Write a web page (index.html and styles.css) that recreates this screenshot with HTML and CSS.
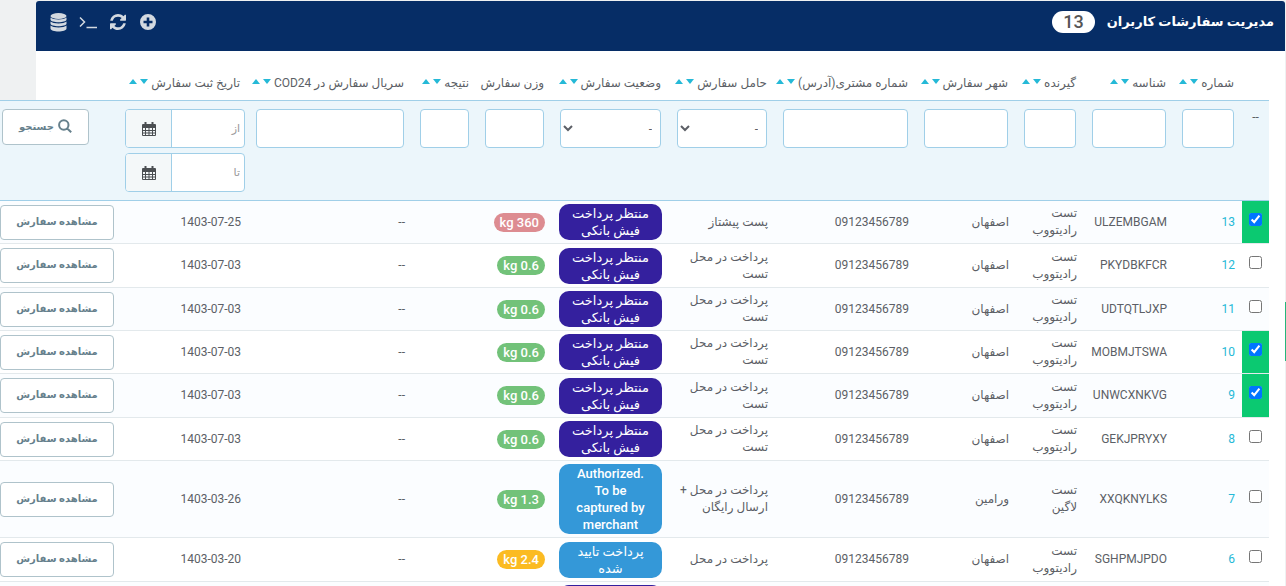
FILE: index.html
```html
<!DOCTYPE html>
<html lang="fa" dir="rtl">
<head>
<meta charset="utf-8">
<title>مدیریت سفارشات کاربران</title>
<link rel="stylesheet" href="styles.css">
</head>
<body>
<main class="panel">
  <header class="panel-head">
    <h1 class="title">مدیریت سفارشات کاربران</h1>
    <span class="count">13</span>
    <nav class="tools">
      <button class="tool" aria-label="افزودن"><svg width="16" height="16" viewBox="0 0 16 16"><path fill="currentColor" fill-rule="evenodd" d="M8 0a8 8 0 1 1 0 16A8 8 0 0 1 8 0zM6.700 3.500v3.200H3.500v2.600h3.200v3.200h2.600V9.300h3.200V6.700H9.300V3.500z"/></svg></button>
      <button class="tool" aria-label="بازخوانی"><svg width="16" height="16" viewBox="0 0 1536 1536"><path fill="currentColor" d="M1511 928q0 5-1 7-64 268-268 434.500T764 1536q-146 0-282.500-55T238 1324l-129 129q-19 19-45 19t-45-19-19-45V960q0-26 19-45t45-19h448q26 0 45 19t19 45-19 45l-137 137q71 66 161 102t187 36q134 0 250-65t186-179q11-17 53-117 8-23 30-23h192q13 0 22.500 9.500t9.500 22.500zM1536 128v448q0 26-19 45t-45 19h-448q-26 0-45-19t-19-45 19-45l138-138Q969 256 768 256q-134 0-250 65T332 500q-11 17-53 117-8 23-30 23H50q-13 0-22.500-9.500T18 608v-7q65-268 270-434.500T768 0q146 0 284 55.500T1297 212l130-129q19-19 45-19t45 19 19 45z"/></svg></button>
      <button class="tool" aria-label="ترمینال"><svg width="18" height="14" viewBox="0 0 18 14"><path fill="none" stroke="currentColor" stroke-width="1.500" d="M1 2.500l4.500 4.500L1 11.500M7.500 12.500H18"/></svg></button>
      <button class="tool" aria-label="پایگاه داده"><svg width="17" height="19" viewBox="0 0 17 19"><g fill="currentColor"><ellipse cx="8.500" cy="3" rx="8" ry="3"/><path d="M.5 4.500c2.500 2.600 13.500 2.600 16 0v2c0 3.600-16 3.600-16 0zM.5 8.500c2.500 2.600 13.500 2.600 16 0v2c0 3.600-16 3.600-16 0zM.5 12.500c2.500 2.600 13.500 2.600 16 0v3c0 4-16 4-16 0z"/></g></svg></button>
    </nav>
  </header>

  <div class="table-wrap">
  <table class="orders">
    <colgroup>
      <col class="c-check"><col class="c-id"><col class="c-ref"><col class="c-name"><col class="c-city"><col class="c-phone"><col class="c-carrier"><col class="c-status"><col class="c-weight"><col class="c-result"><col class="c-serial"><col class="c-date"><col class="c-action">
    </colgroup>
    <thead>
      <tr class="labels">
        <th></th>
        <th>شماره <span class="sort"><i class="down"></i><i class="up"></i></span></th>
        <th>شناسه <span class="sort"><i class="down"></i><i class="up"></i></span></th>
        <th>گیرنده <span class="sort"><i class="down"></i><i class="up"></i></span></th>
        <th>شهر سفارش <span class="sort"><i class="down"></i><i class="up"></i></span></th>
        <th>شماره مشتری(آدرس) <span class="sort"><i class="down"></i><i class="up"></i></span></th>
        <th>حامل سفارش <span class="sort"><i class="down"></i><i class="up"></i></span></th>
        <th>وضعیت سفارش <span class="sort"><i class="down"></i><i class="up"></i></span></th>
        <th>وزن سفارش</th>
        <th>نتیجه <span class="sort"><i class="down"></i><i class="up"></i></span></th>
        <th>سریال سفارش در COD24 <span class="sort"><i class="down"></i><i class="up"></i></span></th>
        <th>تاریخ ثبت سفارش <span class="sort"><i class="down"></i><i class="up"></i></span></th>
        <th></th>
      </tr>
      <tr class="filters">
        <td class="dash">--</td>
        <td><input class="field" type="text" aria-label="شماره"></td>
        <td><input class="field" type="text" aria-label="شناسه"></td>
        <td><input class="field" type="text" aria-label="گیرنده"></td>
        <td><input class="field" type="text" aria-label="شهر سفارش"></td>
        <td><input class="field" type="text" aria-label="شماره مشتری"></td>
        <td><select class="field" aria-label="حامل سفارش"><option>-</option></select></td>
        <td><select class="field" aria-label="وضعیت سفارش"><option>-</option></select></td>
        <td><input class="field" type="text" aria-label="وزن سفارش"></td>
        <td><input class="field" type="text" aria-label="نتیجه"></td>
        <td><input class="field" type="text" aria-label="سریال سفارش"></td>
        <td class="dates">
          <div class="date-group"><input type="text" placeholder="از" aria-label="از تاریخ"><span class="addon"><svg width="14" height="14" viewBox="0 0 14 14"><path fill="none" stroke="currentColor" d="M.5 2.500h13v11H.5zM.5 5.500h13M.5 8.500h13M.5 11h13M3.500 5v8.500M7 5v8.500M10.500 5v8.500"/><path fill="currentColor" d="M1 2h12v3H1zM2.500 0h2v4h-2zM9.500 0h2v4h-2z"/></svg></span></div>
          <div class="date-group"><input type="text" placeholder="تا" aria-label="تا تاریخ"><span class="addon"><svg width="14" height="14" viewBox="0 0 14 14"><path fill="none" stroke="currentColor" d="M.5 2.500h13v11H.5zM.5 5.500h13M.5 8.500h13M.5 11h13M3.500 5v8.500M7 5v8.500M10.500 5v8.500"/><path fill="currentColor" d="M1 2h12v3H1zM2.500 0h2v4h-2zM9.500 0h2v4h-2z"/></svg></span></div>
        </td>
        <td class="search-cell"><button class="btn search"><svg width="14" height="14" viewBox="0 0 14 14"><path fill="none" stroke="currentColor" stroke-width="2" d="M10.500 6A4.700 4.700 0 1 1 1.100 6a4.700 4.700 0 0 1 9.400 0zM9 9.300l4.200 4"/></svg>جستجو</button></td>
      </tr>
    </thead>
    <tbody>
      <tr><td class="check on"><input type="checkbox" checked aria-label="سفارش 13"></td><td class="num">13</td><td>ULZEMBGAM</td><td>تست رادیتووب</td><td>اصفهان</td><td>09123456789</td><td>پست پیشتاز</td><td><span class="status wait">منتظر پرداخت فیش بانکی</span></td><td><span class="weight red">360 kg</span></td><td></td><td>--</td><td>1403-07-25</td><td class="action"><button class="btn view">مشاهده سفارش</button></td></tr>
      <tr><td class="check"><input type="checkbox" aria-label="سفارش 12"></td><td class="num">12</td><td>PKYDBKFCR</td><td>تست رادیتووب</td><td>اصفهان</td><td>09123456789</td><td>پرداخت در محل تست</td><td><span class="status wait">منتظر پرداخت فیش بانکی</span></td><td><span class="weight">0.6 kg</span></td><td></td><td>--</td><td>1403-07-03</td><td class="action"><button class="btn view">مشاهده سفارش</button></td></tr>
      <tr><td class="check"><input type="checkbox" aria-label="سفارش 11"></td><td class="num">11</td><td>UDTQTLJXP</td><td>تست رادیتووب</td><td>اصفهان</td><td>09123456789</td><td>پرداخت در محل تست</td><td><span class="status wait">منتظر پرداخت فیش بانکی</span></td><td><span class="weight">0.6 kg</span></td><td></td><td>--</td><td>1403-07-03</td><td class="action"><button class="btn view">مشاهده سفارش</button></td></tr>
      <tr><td class="check on"><input type="checkbox" checked aria-label="سفارش 10"></td><td class="num">10</td><td>MOBMJTSWA</td><td>تست رادیتووب</td><td>اصفهان</td><td>09123456789</td><td>پرداخت در محل تست</td><td><span class="status wait">منتظر پرداخت فیش بانکی</span></td><td><span class="weight">0.6 kg</span></td><td></td><td>--</td><td>1403-07-03</td><td class="action"><button class="btn view">مشاهده سفارش</button></td></tr>
      <tr><td class="check on"><input type="checkbox" checked aria-label="سفارش 9"></td><td class="num">9</td><td>UNWCXNKVG</td><td>تست رادیتووب</td><td>اصفهان</td><td>09123456789</td><td>پرداخت در محل تست</td><td><span class="status wait">منتظر پرداخت فیش بانکی</span></td><td><span class="weight">0.6 kg</span></td><td></td><td>--</td><td>1403-07-03</td><td class="action"><button class="btn view">مشاهده سفارش</button></td></tr>
      <tr><td class="check"><input type="checkbox" aria-label="سفارش 8"></td><td class="num">8</td><td>GEKJPRYXY</td><td>تست رادیتووب</td><td>اصفهان</td><td>09123456789</td><td>پرداخت در محل تست</td><td><span class="status wait">منتظر پرداخت فیش بانکی</span></td><td><span class="weight">0.6 kg</span></td><td></td><td>--</td><td>1403-07-03</td><td class="action"><button class="btn view">مشاهده سفارش</button></td></tr>
      <tr><td class="check"><input type="checkbox" aria-label="سفارش 7"></td><td class="num">7</td><td>XXQKNYLKS</td><td>تست لاگین</td><td>ورامین</td><td>09123456789</td><td>پرداخت در محل + ارسال رایگان</td><td><span class="status paid">Authorized. To be captured by merchant</span></td><td><span class="weight">1.3 kg</span></td><td></td><td>--</td><td>1403-03-26</td><td class="action"><button class="btn view">مشاهده سفارش</button></td></tr>
      <tr><td class="check"><input type="checkbox" aria-label="سفارش 6"></td><td class="num">6</td><td>SGHPMJPDO</td><td>تست رادیتووب</td><td>اصفهان</td><td>09123456789</td><td>پرداخت در محل</td><td><span class="status paid">پرداخت تایید شده</span></td><td><span class="weight amber">2.4 kg</span></td><td></td><td>--</td><td>1403-03-20</td><td class="action"><button class="btn view">مشاهده سفارش</button></td></tr>
      <tr><td class="check"></td><td></td><td></td><td></td><td></td><td></td><td></td><td><span class="status wait"></span></td><td></td><td></td><td></td><td></td><td class="action"><button class="btn view" aria-label="مشاهده سفارش"></button></td></tr>
    </tbody>
  </table>
  </div>
</main>
<div class="edge"></div>
</body>
</html>
```

FILE: styles.css
```css
* { box-sizing: border-box; }
html { height: 100%; overflow: hidden; background: #eff1f2; }
body {
  margin: 0;
  height: 100%;
  overflow: hidden;
  padding: 1px 1px 0 0;
  font: 12px/17px Roboto, "DejaVu Sans", sans-serif;
  color: #5c5f66;
}
button, input, select { font: inherit; color: inherit; }
.panel { margin-left: 36px; height: 100%; background: #fff; border-radius: 3px 3px 0 0; }
.panel-head {
  display: flex;
  align-items: center;
  height: 50px;
  padding: 0 11px 8px 13px;
  background: #062d66;
  border-radius: 3px 3px 0 0;
}
.title { margin: 0; font-size: 13px; line-height: 24px; font-weight: 700; color: #fff; }
.count {
  margin-right: 12px;
  padding: 0 11px;
  font-size: 18px;
  line-height: 22px;
  font-weight: 500;
  color: #555;
  background: #fff;
  border-radius: 11px;
}
.tools { display: flex; align-items: center; gap: 12px; margin-right: auto; }
.tool { display: flex; justify-content: center; width: 18px; padding: 0; border: 0; background: none; color: #d3d9e0; }
.tool svg { flex: none; }

.table-wrap { margin: 0 16px 0 -36px; }
.orders { width: 100%; table-layout: fixed; border-collapse: separate; border-spacing: 0; }
.c-check { width: 27px; }
.c-id { width: 68px; }
.c-ref { width: 90px; }
.c-name { width: 68px; }
.c-city { width: 100px; }
.c-phone { width: 141px; }
.c-carrier { width: 106px; }
.c-status { width: 117px; }
.c-weight { width: 75px; }
.c-result { width: 65px; }
.c-date { width: 131px; }
.c-action { width: 117px; }

.labels th {
  height: 50px;
  padding: 0 8px 8px 0;
  vertical-align: bottom;
  text-align: right;
  font-weight: 400;
  white-space: nowrap;
  border-bottom: 1px solid #a0cfe8;
}
.sort { display: inline-flex; gap: 3px; vertical-align: 3px; }
.up, .down { border: 4px solid transparent; border-top: 0; border-bottom: 5px solid #25b9d7; }
.down { border-bottom: 0; border-top: 5px solid #25b9d7; }

.filters td { height: 100px; padding: 8px; vertical-align: top; background: #ecf6fb; border-bottom: 1px solid #a0cfe8; }
.filters .dash { padding: 8px 0; text-align: center; }
.field { display: block; width: 100%; height: 39px; padding: 0 8px; background: #fff; border: 1px solid #a0cfe8; border-radius: 4px; }
select.field { padding: 0 4px; }
.filters .dates { padding: 8px 3px 0 8px; }
.date-group { display: flex; height: 39px; margin-bottom: 5px; border: 1px solid #a0cfe8; border-radius: 4px; background: #fff; overflow: hidden; }
.date-group input { flex: 1; min-width: 0; padding: 0 4px; border: 0; background: none; font-size: 11px; }
.date-group input::placeholder { color: #999; }
.addon { display: flex; align-items: center; justify-content: center; width: 46px; border-right: 1px solid #a0cfe8; background: #f4f8f9; color: #4b4f52; }
.btn { background: #fff; border: 1px solid #afc3cb; border-radius: 4px; color: #66808c; font-size: 10px; font-weight: 700; white-space: nowrap; }
.filters .search-cell { padding: 8px 28px 0 0; }
.search { display: flex; align-items: center; justify-content: center; gap: 4px; width: 87px; height: 36px; padding: 0 0 2px; }

tbody td { padding: 3px 7px; height: 43px; vertical-align: middle; text-align: right; background: #fff; border-bottom: 1px solid #e3e9ec; }
tbody tr:nth-child(odd) td { background: #fbfdff; }
tbody tr:nth-child(3n+2) td { height: 44px; }
tbody .num { color: #25b9d7; }
tbody .check { padding: 0 0 6px; text-align: center; }
.check input { display: block; width: 13px; height: 13px; margin: 0 auto; }
tbody tr:nth-child(n) .on { background: #0bc971; }
.status { display: block; min-height: 36px; padding: 1px 10px; text-align: center; font-size: 13px; font-weight: 500; color: #fff; border-radius: 10px; }
.wait { background: #34209e; }
.paid { background: #3498d8; }
.weight { display: inline-block; padding: 1px 6px; font-size: 13px; font-weight: 500; white-space: nowrap; color: #fff; background: #72c279; border-radius: 10px; }
.weight.red { background: #dd8c91; }
.weight.amber { background: #fbbb22; }
tbody .action { padding: 0 3px 0 0; }
.view { display: block; width: 114px; height: 35px; padding: 0 0 2px; }

.edge { position: absolute; right: 0; top: 302px; width: 1px; height: 59px; background: #24b77b; }
```
